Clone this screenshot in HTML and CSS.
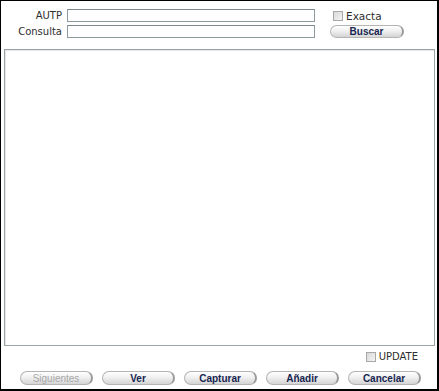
FILE: index.html
```html
<!DOCTYPE html>
<html lang="es">
<head>
    <meta charset="UTF-8">
    <title>Consulta AUTP</title>
    <link rel="stylesheet" href="styles.css">
</head>
<body>
    <div class="frame">
        <div class="search-form">
            <label class="lbl" for="autp">AUTP</label>
            <input class="txt" id="autp" type="text">
            <label class="check-line">
                <span class="box"></span> Exacta
            </label>

            <label class="lbl" for="consulta">Consulta</label>
            <input class="txt" id="consulta" type="text">
            <button class="btn">Buscar</button>
        </div>

        <div class="results"></div>

        <div class="update-line">
            <label class="check-line">
                <span class="box"></span> UPDATE
            </label>
        </div>

        <!-- Bottom action buttons -->
        <div class="actions">
            <button class="btn disabled">Siguientes</button>
            <button class="btn">Ver</button>
            <button class="btn">Capturar</button>
            <button class="btn">Añadir</button>
            <button class="btn">Cancelar</button>
        </div>
    </div>
</body>
</html>
```

FILE: styles.css
```css
body {
    margin: 0;
    background: #fff;
    font-family: "DejaVu Sans", Verdana, sans-serif;
    font-size: 10px;
    color: #333;
}
.frame {
    box-sizing: border-box;
    width: 439px;
    height: 391px;
    border-style: solid;
    border-color: #000;
    border-width: 1px 2px 2px 1px;
    background: #fff;
}

/* Top search form */
.search-form {
    display: grid;
    grid-template-columns: 61px 248px 80px;
    grid-template-rows: 13px 13px;
    column-gap: 5px;
    row-gap: 3px;
    padding-top: 8px;
    align-items: center;
}
.search-form > :nth-child(3),
.search-form > :nth-child(6) {
    margin-left: 10px;
}
.lbl {
    text-align: right;
    font-size: 10px;
    line-height: 13px;
    color: #2e2e2e;
}
.txt {
    box-sizing: border-box;
    width: 248px;
    height: 13px;
    margin: 0;
    padding: 0;
    border: 1px solid #8a9aa0;
    border-top-color: #7a8a90;
    background: #fff;
}
.check-line {
    display: flex;
    align-items: center;
    gap: 3px;
    font-size: 10.5px;
    color: #2e2e2e;
}
.search-form .check-line {
    padding-left: 3px;
}
.box {
    box-sizing: border-box;
    width: 10px;
    height: 10px;
    border: 1px solid #a8a8a8;
    background: linear-gradient(135deg, #d8d8d8, #f4f4f4);
}

/* Pill buttons */
.btn {
    box-sizing: border-box;
    height: 13px;
    width: 74px;
    padding: 0;
    border: 1px solid #b4b4b4;
    border-right: 2px solid #9a9a9a;
    border-radius: 7px;
    background: linear-gradient(#ffffff, #f0f0f0 45%, #d4d4d4);
    font-family: "Liberation Sans", Arial, sans-serif;
    font-size: 10px;
    font-weight: bold;
    color: #172550;
    line-height: 11px;
}
.btn.disabled {
    color: #a8a8a8;
    font-weight: normal;
}

/* Result panel */
.results {
    box-sizing: border-box;
    width: 431px;
    height: 297px;
    margin: 11px 0 0 3px;
    border: 1px solid #9aa4a6;
    box-shadow: inset 1px 1px 0 #e6e6e6;
    background: #fff;
}
.update-line {
    display: flex;
    justify-content: flex-end;
    padding: 4px 19px 0 0;
    height: 13px;
}
.update-line .check-line {
    font-size: 10px;
}
.actions {
    display: flex;
    gap: 9px;
    padding: 8px 0 0 19px;
}
.actions .btn {
    width: 73px;
    height: 14px;
}
```
